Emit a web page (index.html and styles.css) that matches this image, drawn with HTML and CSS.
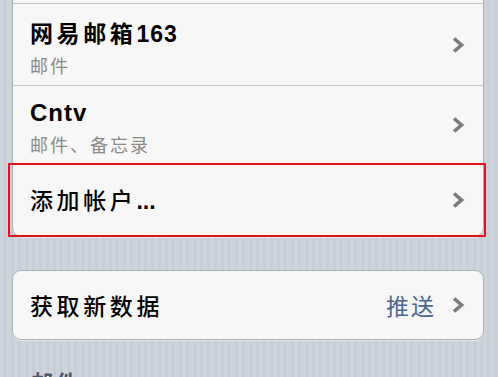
FILE: index.html
```html
<!DOCTYPE html>
<html lang="zh-CN">
<head>
<meta charset="utf-8">
<link rel="stylesheet" href="styles.css">
</head>
<body>
<div class="page">
  <div class="group group-top">
    <div class="stub"></div>
    <div class="row row-tall">
      <div class="texts">
        <div class="title">网易邮箱<span class="latin">163</span></div>
        <div class="sub">邮件</div>
      </div>
      <svg class="chev" viewBox="0 0 14 18" width="14" height="18"><path d="M3 2.5 L10.5 9 L3 15.5" fill="none" stroke="#7b7b7b" stroke-width="3.6"/></svg>
    </div>
    <div class="row row-mid">
      <div class="texts">
        <div class="title latin">Cntv</div>
        <div class="sub">邮件、备忘录</div>
      </div>
      <svg class="chev" viewBox="0 0 14 18" width="14" height="18"><path d="M3 2.5 L10.5 9 L3 15.5" fill="none" stroke="#7b7b7b" stroke-width="3.6"/></svg>
    </div>
    <div class="row row-last">
      <div class="label">添加帐户<span class="latin">...</span></div>
      <svg class="chev" viewBox="0 0 14 18" width="14" height="18"><path d="M3 2.5 L10.5 9 L3 15.5" fill="none" stroke="#7b7b7b" stroke-width="3.6"/></svg>
      <div class="highlight"></div>
    </div>
  </div>

  <div class="group group-fetch">
    <div class="row row-single">
      <div class="label">获取新数据</div>
      <div class="value">推送</div>
      <svg class="chev" viewBox="0 0 14 18" width="14" height="18"><path d="M3 2.5 L10.5 9 L3 15.5" fill="none" stroke="#7b7b7b" stroke-width="3.6"/></svg>
    </div>
  </div>

  <div class="section-header">邮件</div>
</div>
</body>
</html>
```

FILE: styles.css
```css
html, body {
  margin: 0;
  padding: 0;
}
body {
  width: 498px;
  height: 377px;
  overflow: hidden;
  background: repeating-linear-gradient(90deg, #ced4dc 0 4px, #c8ced7 4px 7px);
  font-family: "Noto Sans CJK SC", sans-serif;
}
.page {
  display: flex;
  flex-direction: column;
  padding: 0 14px 0 12px;
}
.group {
  background: #f7f7f7;
  border: 1px solid #acb0b5;
  border-radius: 9px;
  box-shadow: 0 1px 0 #e4e8ec;
}
.group-top {
  border-top: none;
  border-top-left-radius: 0;
  border-top-right-radius: 0;
}
.stub {
  height: 3px;
  border-bottom: 1px solid #c6c6c6;
}
.row {
  position: relative;
  display: flex;
  align-items: center;
  padding: 0 18px 0 17px;
}
.row-tall {
  height: 81px;
  border-bottom: 1px solid #c6c6c6;
}
.row-mid {
  height: 77px;
  border-bottom: 1px solid #c6c6c6;
}
.row-last {
  height: 72px;
}
.row-single {
  height: 68px;
}
.texts {
  flex: 1;
  display: flex;
  flex-direction: column;
  margin-top: 4px;
}
.title {
  font-size: 23px;
  font-weight: bold;
  color: #000;
  letter-spacing: 3.6px;
  line-height: 30px;
}
.latin {
  font-family: "Liberation Sans", "Noto Sans CJK SC", sans-serif;
  letter-spacing: 1px;
}
.title.latin {
  font-size: 24px;
}
.sub {
  font-size: 18px;
  color: #8a8a8a;
  letter-spacing: 2px;
  line-height: 24px;
  margin-top: 4px;
}
.label {
  flex: 1;
  font-size: 23px;
  font-weight: 500;
  color: #000;
  letter-spacing: 3.6px;
  line-height: 30px;
}
.label .latin {
  font-weight: bold;
  letter-spacing: 0;
}
.value {
  font-size: 23px;
  color: #4a6593;
  letter-spacing: 2px;
  margin-right: 15px;
}
.chev {
  flex: none;
}
.highlight {
  position: absolute;
  left: -5px;
  right: -3px;
  top: -1px;
  bottom: -1px;
  border: 2px solid #e0131c;
  pointer-events: none;
}
.group-fetch {
  margin-top: 33px;
}
.section-header {
  margin-top: 26px;
  padding-left: 19px;
  font-size: 22px;
  font-weight: bold;
  color: #4c566c;
  text-shadow: 0 1px 0 #fff;
  letter-spacing: 3px;
  line-height: 30px;
}
```
